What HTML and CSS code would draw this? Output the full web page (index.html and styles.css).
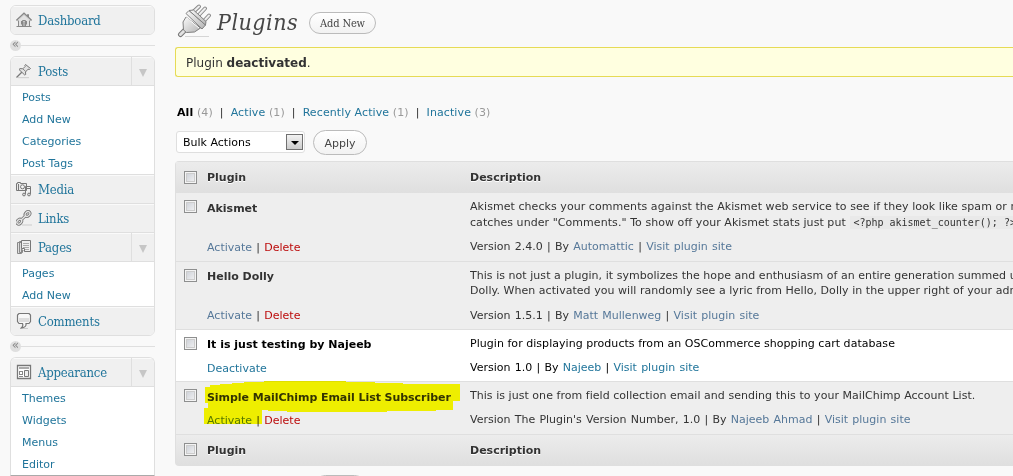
FILE: index.html
```html
<!DOCTYPE html>
<html lang="en">
<head>
<meta charset="utf-8">
<title>Plugins</title>
<link rel="stylesheet" href="styles.css">
</head>
<body>
<div class="page">
  <nav class="sidebar">
    <div class="menu">
      <a class="menu-head"><svg class="icon" viewBox="0 0 16 16"><path d="M3 8l5-5 5 5v6H3z" fill="#e2e2e2"/><path d="M.5 8.500L8 1.500l7.500 7" fill="none" stroke="#888" stroke-width="1.800"/><path d="M1.500 8.500L8 2.500l6.500 6" fill="none" stroke="#ddd" stroke-width=".8"/><path d="M12.500 5V2.500h-1v2M2.500 8.500v6M13.500 8.500v6M.5 14.500h15M5.500 9v3.500M10.500 9v3.500M6.500 14V8.500h3V14" fill="none" stroke="#888"/><path d="M7.500 9.500h1V14h-1z" fill="#777"/></svg><span>Dashboard</span></a>
    </div>
    <div class="separator"><span>«</span></div>
    <div class="menu">
      <a class="menu-head"><svg class="icon" viewBox="0 0 16 16"><path d="M.5 14.500L6 9" stroke="#777" stroke-width="1.300"/><path d="M2 14.700h11" stroke="#ccc"/><path d="M9.500 1.500l5 4-1 1-1.500-.3-2.500 2.800.2 2.500-1 .5L3 6.500l1-.9 2.800.2 2.500-2.500-.5-1z" fill="#e2e2e2" stroke="#777"/><path d="M7 6l2.700 2.500" stroke="#888"/></svg><span>Posts</span><i class="toggle"></i></a>
      <div class="submenu"><a>Posts</a><a>Add New</a><a>Categories</a><a>Post Tags</a></div>
      <a class="menu-head"><svg class="icon" viewBox="0 0 16 16"><path d="M.5 2.500h1v-1h3v1h6v7H.5zM2.500 3v6" fill="#eaeaea" stroke="#777"/><circle cx="6.500" cy="5.800" r="2" fill="#f4f4f4" stroke="#777"/><path d="M9.500 13V5.500h5V13M9.500 7.500h5" fill="none" stroke="#777"/><circle cx="8" cy="13.500" r="1.400" fill="#ddd" stroke="#777"/><circle cx="13" cy="13.500" r="1.400" fill="#ddd" stroke="#777"/></svg><span>Media</span></a>
      <a class="menu-head"><svg class="icon" viewBox="0 0 16 16"><path d="M6 15h10" stroke="#ccc"/><g fill="none" stroke="#777" stroke-width="3"><ellipse cx="11.500" cy="4" rx="2.700" ry="2" transform="rotate(-45 11.500 4)"/><ellipse cx="3.300" cy="11.700" rx="2.700" ry="2" transform="rotate(-45 3.300 11.700)"/><path d="M5 10l5-4.500"/></g><g fill="none" stroke="#e6e6e6" stroke-width="1.300"><ellipse cx="11.500" cy="4" rx="2.700" ry="2" transform="rotate(-45 11.500 4)"/><ellipse cx="3.300" cy="11.700" rx="2.700" ry="2" transform="rotate(-45 3.300 11.700)"/><path d="M5 10l5-4.500"/></g></svg><span>Links</span></a>
      <a class="menu-head"><svg class="icon" viewBox="0 0 16 16"><path d="M1.500 3.500h4v11h-4zM3.500 2.500h3v11h-3z" fill="#ddd" stroke="#888"/><path d="M5.500 1.500h9v11h-6l-3-3z" fill="#eee" stroke="#777"/><path d="M7 4.500h6M7 6.500h6M7 8.500h6M9 10.500h4" stroke="#aaa"/><path d="M5.500 9.500h3v3" fill="#fff" stroke="#777"/></svg><span>Pages</span><i class="toggle"></i></a>
      <div class="submenu"><a>Pages</a><a>Add New</a></div>
      <a class="menu-head"><svg class="icon" viewBox="0 0 16 16"><path d="M4 15.500h8" stroke="#ccc"/><path d="M3 .5h10l1.500 1.500v6.500L13 10.500h-3v1.500q-.5 2.500-4.500 2.800Q7.500 13 6.500 10.500H3L1.500 8.500V2z" fill="#f7f7f7" stroke="#777" stroke-width="1.200"/><path d="M3 5h10v4H3z" fill="#ddd"/></svg><span>Comments</span></a>
    </div>
    <div class="separator"><span>«</span></div>
    <div class="menu menu-last">
      <a class="menu-head"><svg class="icon" viewBox="0 0 16 16"><path d="M1.500 1.500h13v13h-13z" fill="#fff" stroke="#777" stroke-width="1.300"/><path d="M3 4h10" stroke="#aaa" stroke-width="2"/><path d="M3 7.500h4M3 10.500h4M3 12.500h4M3.500 7v3M6.500 7v3" stroke="#888"/><path d="M8.500 6.500h4v6h-4z" fill="#eee" stroke="#777"/></svg><span>Appearance</span><i class="toggle"></i></a>
      <div class="submenu"><a>Themes</a><a>Widgets</a><a>Menus</a><a>Editor</a></div>
    </div>
  </nav>

  <main class="content">
    <header class="title-bar">
      <svg class="plug" viewBox="0 0 36 36"><defs><linearGradient id="metal" x1="0" y1="0" x2="1" y2="1"><stop offset="0" stop-color="#fafafa"/><stop offset="1" stop-color="#b4b4b4"/></linearGradient></defs><path d="M8 34.500h24" stroke="#d5d5d5"/><g stroke-linecap="round"><path d="M14 12l8-7.500M20 15l8-8.500M26 20l6-6.500" stroke="#888" stroke-width="4"/><path d="M14 12l8-7.500M20 15l8-8.500M26 20l6-6.500" stroke="#eee" stroke-width="2"/></g><path d="M3.500 32.500l4.500-4.500" stroke="#777" stroke-width="5" stroke-linecap="round"/><path d="M3.500 32.500l4.500-4.500" stroke="#e2e2e2" stroke-width="3" stroke-linecap="round"/><g fill="url(#metal)" stroke="#808080"><path d="M9 15l-3 5 .5 8 3 2.500 8-.5 6-4z"/><path d="M9 11.500l3-3L28.500 23l-3.500 4z"/><path d="M12 8.500l4.500-.5L29 19.500l-.5 3.500z"/></g><path d="M9.500 15.500l12.500 10.500" stroke="#fff"/></svg>
      <h1>Plugins</h1>
      <a class="button add-new">Add New</a>
    </header>
    <div class="notice">Plugin <b>deactivated</b>.</div>
    <div class="filters"><b>All</b> <i>(4)</i><s>|</s><a>Active</a> <i>(1)</i><s>|</s><a>Recently Active</a> <i>(1)</i><s>|</s><a>Inactive</a> <i>(3)</i></div>
    <div class="actions">
      <div class="select"><span>Bulk Actions</span><i class="arrow"></i></div>
      <a class="button apply">Apply</a>
    </div>
    <section class="table">
      <div class="bar"><i class="check"></i><b class="col-name">Plugin</b><b>Description</b></div>
      <div class="row akismet">
        <i class="check"></i>
        <div class="name"><b>Akismet</b><div class="links"><a>Activate</a> | <a class="delete">Delete</a></div></div>
        <div class="desc"><div><p>Akismet checks your comments against the Akismet web service to see if they look like spam or not</p><p>catches under "Comments." To show off your Akismet stats just put <code>&lt;?php akismet_counter(); ?&gt;</code></p></div><p class="meta">Version 2.4.0 | By <a>Automattic</a> | <a>Visit plugin site</a></p></div>
      </div>
      <div class="row hello">
        <i class="check"></i>
        <div class="name"><b>Hello Dolly</b><div class="links"><a>Activate</a> | <a class="delete">Delete</a></div></div>
        <div class="desc"><div><p>This is not just a plugin, it symbolizes the hope and enthusiasm of an entire generation summed up</p><p>Dolly. When activated you will randomly see a lyric from Hello, Dolly in the upper right of your admin</p></div><p class="meta">Version 1.5.1 | By <a>Matt Mullenweg</a> | <a>Visit plugin site</a></p></div>
      </div>
      <div class="row active">
        <i class="check"></i>
        <div class="name"><b>It is just testing by Najeeb</b><div class="links"><a>Deactivate</a></div></div>
        <div class="desc"><p>Plugin for displaying products from an OSCommerce shopping cart database</p><p class="meta">Version 1.0 | By <a>Najeeb</a> | <a>Visit plugin site</a></p></div>
      </div>
      <div class="row mailchimp">
        <i class="check"></i>
        <div class="name"><b>Simple MailChimp Email List Subscriber</b><div class="links"><a>Activate</a> | <a class="delete">Delete</a></div></div>
        <div class="desc"><p>This is just one from field collection email and sending this to your MailChimp Account List.</p><p class="meta">Version The Plugin's Version Number, 1.0 | By <a>Najeeb Ahmad</a> | <a>Visit plugin site</a></p></div>
        <svg class="marker" viewBox="204 381 256 43"><path fill="#ff0" d="M205 387h5v-2h10v-1h12v-1h12v-1h20v-1h82v1h29v1h28v1h57v1v16h-7v9h-17v1h-49v1H287v-1h-19v-1h-6v14h-58v-16h4v-5h-3z"/></svg>
      </div>
      <div class="bar foot"><i class="check"></i><b class="col-name">Plugin</b><b>Description</b></div>
    </section>
    <div class="bottom-actions"><i></i></div>
  </main>
</div>
</body>
</html>
```
FILE: styles.css
```css
* { box-sizing: border-box; }
body { margin: 0; background: #f9f9f9; font-family: "DejaVu Sans", sans-serif; font-size: 11px; color: #333; }
p, h1 { margin: 0; }
i { font-style: normal; }
s { text-decoration: none; margin: 0 7px; }
a { color: #21759b; }
.page { display: flex; width: 1013px; height: 476px; overflow: hidden; }

.sidebar { width: 155px; flex: none; padding: 5px 0 0 10px; }
.menu { border: 1px solid #dfdfdf; border-radius: 6px; background: #fff; overflow: hidden; }
.menu-head { display: flex; align-items: center; height: 29px; padding-left: 5px; background: #f0f0f0; border-bottom: 1px solid #dfdfdf; box-shadow: inset 0 1px #fafafa; font-family: "DejaVu Serif Condensed", "DejaVu Serif", serif; font-stretch: condensed; font-size: 13px; letter-spacing: -0.200px; }
.menu-head:last-child { height: 28px; border-bottom: 0; }
.icon { width: 16px; height: 16px; margin-right: 6px; flex: none; }
.toggle { width: 23px; height: 28px; margin-left: auto; border-left: 1px solid #dfdfdf; display: flex; align-items: center; justify-content: center; }
.toggle::before { content: ""; margin-top: 4px; border: 4.500px solid transparent; border-top: 8px solid #c6c6c6; border-bottom: 0; }
.submenu { border-bottom: 1px solid #dfdfdf; }
.submenu a { display: block; height: 22px; line-height: 24px; padding-left: 11px; }
.submenu:last-child { border-bottom: 0; }
.separator { height: 21px; display: flex; align-items: center; }
.separator span { width: 11px; height: 11px; border-radius: 50%; background: #dfdfdf; color: #888; font-size: 12px; line-height: 9px; text-align: center; }
.separator::after { content: ""; flex: 1; border-top: 1px solid #dfdfdf; }
.menu-last { height: 119px; border-bottom: 1px solid #aaa; border-radius: 6px 6px 0 0; }

.content { flex: 1; min-width: 0; padding-left: 20px; }
.title-bar { height: 47px; display: flex; align-items: flex-start; }
.plug { width: 36px; height: 36px; margin: 2px 0 0 2px; flex: none; }
h1 { margin: 7px 0 0 4px; width: 92px; font: italic 23px/30px "DejaVu Serif Condensed", "DejaVu Serif", serif; font-stretch: condensed; letter-spacing: 0.500px; color: #464646; white-space: nowrap; }
.button { display: flex; align-items: center; justify-content: center; border: 1px solid #bbb; border-radius: 13px; background: linear-gradient(#fff, #f2f2f2); color: #464646; }
.add-new { width: 67px; height: 22px; margin-top: 12px; font: 11px "DejaVu Serif Condensed", "DejaVu Serif", serif; font-stretch: condensed; letter-spacing: -0.150px; }
.notice { height: 30px; padding-left: 10px; border: 1px solid #e6db55; border-right: 0; border-radius: 3px 0 0 3px; background: #ffffe0; font-size: 12px; line-height: 30px; }
.filters { height: 53px; padding: 29px 0 0 2px; line-height: 14px; white-space: nowrap; letter-spacing: 0.100px; }
.filters b { color: #000; }
.filters i { color: #999; }
.actions { height: 31px; display: flex; align-items: flex-start; }
.select { width: 129px; height: 22px; margin: 1px 8px 0 1px; padding: 0 1px 0 6px; border: 1px solid #dfdfdf; border-radius: 3px; background: #fff; color: #000; display: flex; align-items: center; justify-content: space-between; }
.select span, .apply { padding-top: 1px; }
.arrow { width: 17px; height: 16px; border: 1px solid #707070; background: linear-gradient(#f2f2f2, #ccc); display: flex; align-items: center; justify-content: center; }
.arrow::before { content: ""; margin-top: 2px; border: 4px solid transparent; border-top-color: #000; border-bottom: 0; }
.apply { width: 54px; height: 25px; }

.table { border: 1px solid #dfdfdf; border-right: 0; border-radius: 4px 0 0 4px; }
.bar { height: 31px; display: flex; align-items: center; background: linear-gradient(#ececec, #dfdfdf); text-shadow: 0 1px #fff; }
.bar .check { margin-top: -1px; }
.foot { height: 30px; }
.col-name { width: 263px; }
.check { width: 13px; height: 13px; flex: none; margin: 7px 10px 0 8px; border: 1px solid #8e8f8f; background: linear-gradient(135deg, #c8ccd4, #f6f6f6); box-shadow: inset 0 0 0 1px #f4f4f4, inset 0 0 0 2px #ccc; }
.row { position: relative; display: flex; border-bottom: 1px solid #dfdfdf; background: #eee; line-height: 16px; white-space: nowrap; }
.name { width: 263px; flex: none; padding: 8px 0 5px; display: flex; flex-direction: column; justify-content: space-between; }
.links, .meta { word-spacing: 0.750px; }
.desc { flex: 1; min-width: 0; overflow: hidden; padding: 6px 0; display: flex; flex-direction: column; justify-content: space-between; letter-spacing: 0.040px; }
.meta { letter-spacing: 0; }
.akismet .desc p:not(.meta) { letter-spacing: 0.060px; }
.row a { color: #567899; }
.row .delete { color: #bc0b0b; }
.row.active { height: 52px; background: #fff; color: #000; }
.row.active a { color: #21759b; }
.akismet { height: 69px; }
.hello { height: 68px; }
.mailchimp { height: 53px; }
.mailchimp b { letter-spacing: -0.050px; }
.hello .name, .active .name { padding-top: 7px; }
.active .name { padding-bottom: 4px; }
.active .desc { padding-bottom: 5px; }
.hello p { line-height: 15px; }
code { margin: 0 1px; padding: 1px 3px; background: #e9e9e9; font: 10px "DejaVu Sans Mono", monospace; letter-spacing: 0; }
.marker { position: absolute; left: 28px; top: -1px; width: 256px; height: 43px; mix-blend-mode: multiply; }
.bottom-actions { padding: 9px 0 0 138px; }
.bottom-actions i { display: block; width: 54px; height: 25px; border: 1px solid #bbb; border-radius: 13px; }
```
